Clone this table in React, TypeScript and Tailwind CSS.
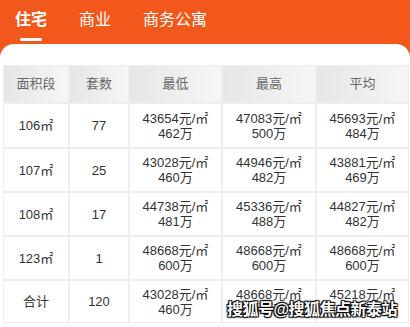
const rows = [
  { area: "106㎡", count: "77", min: ["43654元/㎡", "462万"], max: ["47083元/㎡", "500万"], avg: ["45693元/㎡", "484万"] },
  { area: "107㎡", count: "25", min: ["43028元/㎡", "460万"], max: ["44946元/㎡", "482万"], avg: ["43881元/㎡", "469万"] },
  { area: "108㎡", count: "17", min: ["44738元/㎡", "481万"], max: ["45336元/㎡", "488万"], avg: ["44827元/㎡", "482万"] },
  { area: "123㎡", count: "1", min: ["48668元/㎡", "600万"], max: ["48668元/㎡", "600万"], avg: ["48668元/㎡", "600万"] },
  { area: "合计", count: "120", min: ["43028元/㎡", "460万"], max: ["48668元/㎡", "600万"], avg: ["45218元/㎡", "484万"] },
];

const heights = ["h-[43px]", "h-[42px]", "h-[42px]", "h-[42px]", "h-[41px]"];

function Cell({ children, h }: { children: React.ReactNode; h: string }) {
  return (
    <div className={`flex ${h} flex-col items-center justify-center bg-white text-[13px] leading-[15px] text-[#333]`}>
      {children}
    </div>
  );
}

function Price({ lines, h }: { lines: string[]; h: string }) {
  return (
    <Cell h={h}>
      <span>{lines[0]}</span>
      <span>{lines[1]}</span>
    </Cell>
  );
}

export default function App() {
  const headers = ["面积段", "套数", "最低", "最高", "平均"];

  return (
    <div className="relative h-[327px] w-[410px] overflow-hidden bg-[#f2571b] font-['Liberation_Sans','Noto_Sans_CJK_SC',sans-serif]">
      <div className="flex h-[44px] items-start gap-[32px] pl-[15px] pt-[9px] text-[16px] text-white">
        <div className="flex flex-col items-center">
          <span className="font-bold leading-[22px]">住宅</span>
          <span className="mt-[7px] h-[3px] w-[22px] rounded-full bg-white" />
        </div>
        <span className="leading-[22px]">商业</span>
        <span className="leading-[22px]">商务公寓</span>
      </div>

      <div className="h-[283px] rounded-t-[14px] bg-white pl-[3px] pt-[21px]">
        <div className="grid w-[406px] grid-cols-[64px_58px_91px_92px_91px] gap-[2px] bg-[#eeeeee] p-[1px]">
          {headers.map((h) => (
            <div
              key={h}
              className="flex h-[36px] items-center justify-center bg-gradient-to-r from-[#e6e6e6] to-[#f6f6f6] text-[13px] text-[#666]"
            >
              {h}
            </div>
          ))}
          {rows.map((r, i) => (
            <div key={r.area} className="contents">
              <Cell h={heights[i]}>{r.area}</Cell>
              <Cell h={heights[i]}>{r.count}</Cell>
              <Price lines={r.min} h={heights[i]} />
              <Price lines={r.max} h={heights[i]} />
              <Price lines={r.avg} h={heights[i]} />
            </div>
          ))}
        </div>
      </div>

      {/* watermark */}
      <div
        className="absolute right-[13px] bottom-[5px] text-[16px] font-bold tracking-[-0.5px] text-white"
        style={{ textShadow: "0 0 1px #000, 1px 1px 1px #000, -1px -1px 1px #000, 1px -1px 1px #000, -1px 1px 1px #000" }}
      >
        搜狐号@搜狐焦点新泰站
      </div>
    </div>
  );
}
